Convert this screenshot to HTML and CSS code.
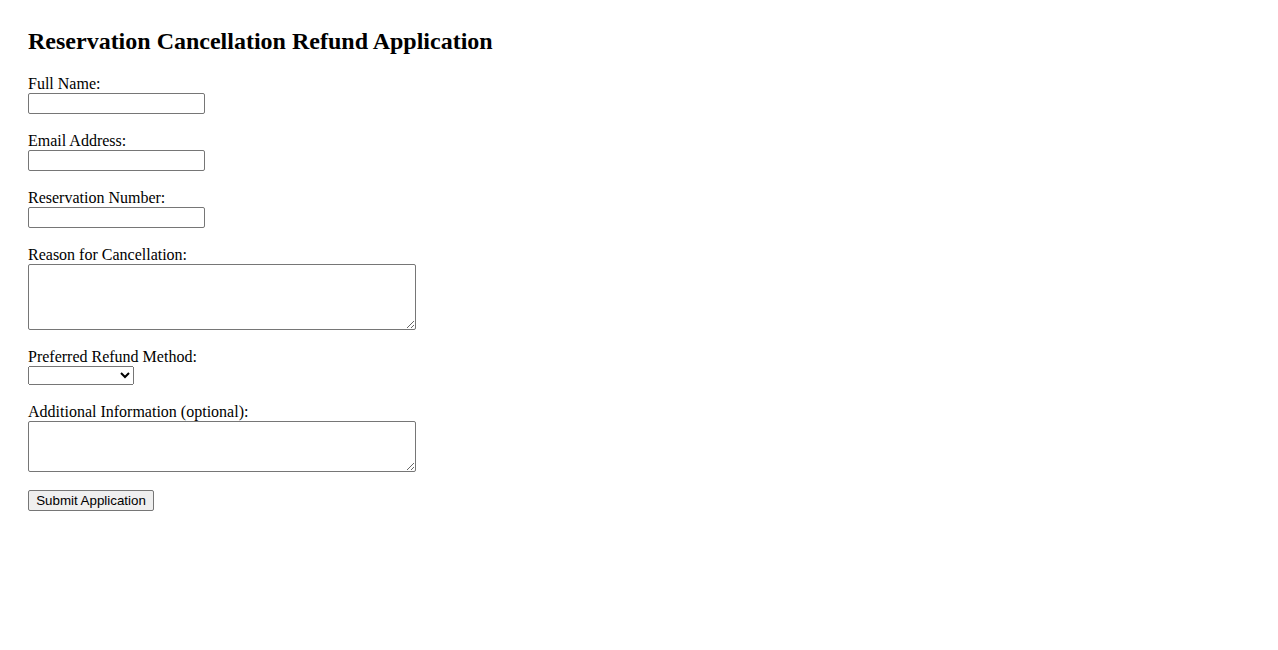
FILE: index.html
```html
<!DOCTYPE html>
<html lang="en">
<head>
<meta charset="utf-8">
<title>Reservation Cancellation Refund Application</title>
<link rel="stylesheet" href="styles.css">
</head>
<body>
<div class="page">
  <h2 class="title">Reservation Cancellation Refund Application</h2>
  <form class="form">
    <div class="field">
      <label class="label" for="name">Full Name:</label>
      <input class="text-input" type="text" id="name" name="name">
    </div>
    <div class="field">
      <label class="label" for="email">Email Address:</label>
      <input class="text-input" type="email" id="email" name="email">
    </div>
    <div class="field">
      <label class="label" for="res">Reservation Number:</label>
      <input class="text-input" type="text" id="res" name="res">
    </div>
    <div class="field">
      <label class="label" for="reason">Reason for Cancellation:</label>
      <textarea class="area area-tall" id="reason" name="reason"></textarea>
    </div>
    <div class="field">
      <label class="label" for="method">Preferred Refund Method:</label>
      <select class="select" id="method" name="method">
        <option value=""></option>
      </select>
    </div>
    <div class="field">
      <label class="label" for="info">Additional Information (optional):</label>
      <textarea class="area area-short" id="info" name="info"></textarea>
    </div>
    <div class="field">
      <button class="submit" type="submit">Submit Application</button>
    </div>
  </form>
</div>
</body>
</html>
```
FILE: styles.css
```css
html, body {
  margin: 0;
  padding: 0;
  background: #ffffff;
}

.page {
  padding: 28px;
  font-family: "Liberation Serif", "Times New Roman", serif;
  font-size: 16px;
  color: #000000;
}

.title {
  margin: 0 0 19.92px 0;
  font-size: 24px;
  font-weight: bold;
  line-height: normal;
}

.form {
  display: flex;
  flex-direction: column;
  align-items: flex-start;
  gap: 18px;
}

.field {
  display: flex;
  flex-direction: column;
  align-items: flex-start;
}

.label {
  display: block;
  line-height: normal;
}

.text-input {
  box-sizing: border-box;
  width: 177px;
  height: 21px;
  margin: 0;
  border: 1px solid #767676;
  border-radius: 2px;
  padding: 1px 2px;
  background: #ffffff;
}

.area {
  box-sizing: border-box;
  width: 388px;
  margin: 0;
  border: 1px solid #767676;
  border-radius: 2px;
  padding: 2px;
  background: #ffffff;
  font-family: "Liberation Mono", monospace;
  font-size: 13.33px;
}

.area-tall {
  height: 66px;
}

.area-short {
  height: 51px;
}

.select {
  box-sizing: border-box;
  width: 106px;
  height: 19px;
  margin: 0;
  font-family: "Liberation Sans", Arial, sans-serif;
  font-size: 13.33px;
}

.submit {
  box-sizing: border-box;
  width: 126px;
  height: 21px;
  margin: 0;
  padding: 1px 6px;
  border: 1px solid #767676;
  border-radius: 2px;
  background: #efefef;
  color: #000000;
  font-family: "Liberation Sans", Arial, sans-serif;
  font-size: 13.33px;
}
```
